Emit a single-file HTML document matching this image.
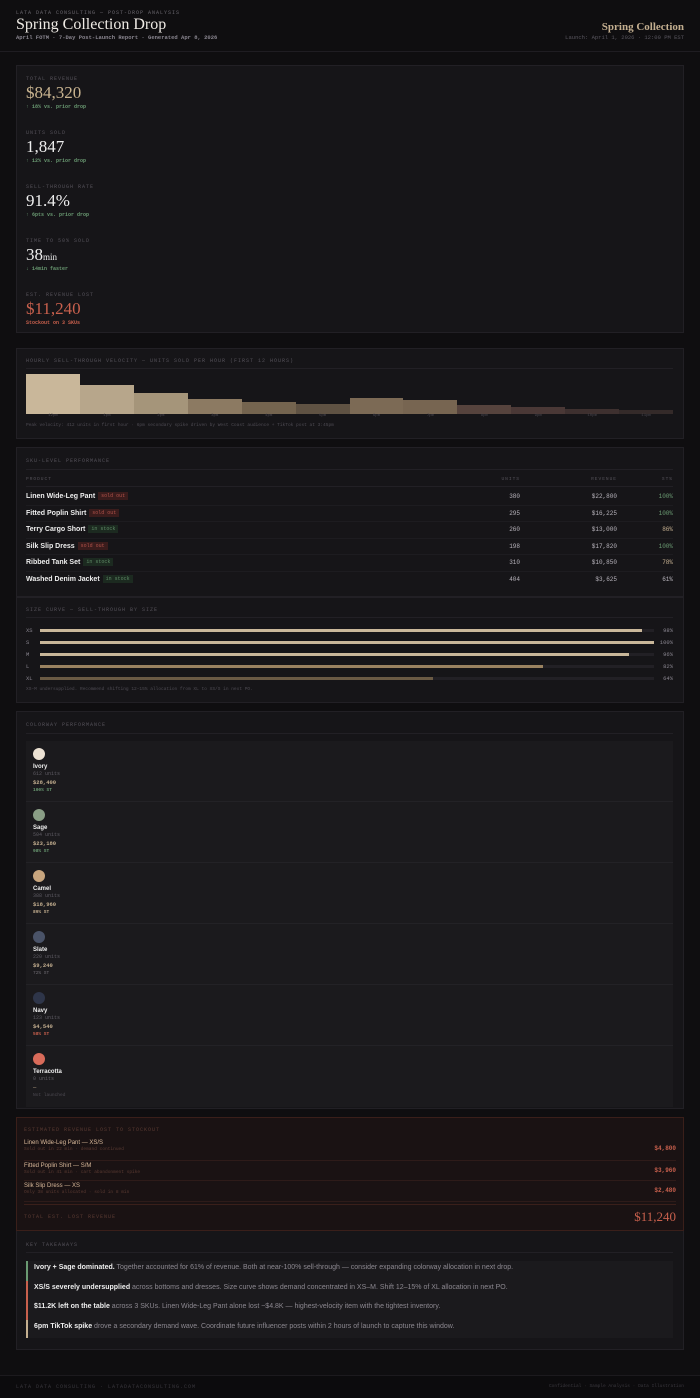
<!DOCTYPE html><html><head><meta charset="utf-8"><style>
*{margin:0;padding:0;box-sizing:border-box}
body{width:700px;height:1398px;background:#0f0e10;color:#ddd;font-family:"Liberation Mono",monospace;position:relative;overflow:hidden}
.a{position:absolute}
.serif{font-family:"Liberation Serif",serif}
.sans{font-family:"Liberation Sans",sans-serif}
.card{position:absolute;left:16px;width:668px;background:#161518;border:1px solid #222025}
.lbl{font-size:5px;letter-spacing:1px;color:#55525a;text-transform:uppercase}
.g{color:#6a9a72}.r{color:#c8604d}
.tag{font-size:5px;padding:1px 3px;margin-left:3px;vertical-align:1px;font-family:"Liberation Mono",monospace;font-weight:normal}
.so{background:#3a1c1c;color:#b0524a}.is{background:#1c2a20;color:#5e8a66}
</style></head><body>
<div class="a lbl" style="left:16px;top:10px;color:#6a676e">LATA DATA CONSULTING — POST-DROP ANALYSIS</div>
<div class="a serif" style="left:16px;top:16px;font-size:16px;color:#efebe5">Spring Collection Drop</div>
<div class="a" style="left:16px;top:34px;font-size:5.5px;color:#8a8690;font-weight:bold">April FOTM · 7-Day Post-Launch Report · Generated Apr 8, 2026</div>
<div class="a serif" style="right:16px;top:21px;font-size:11px;color:#c4af90;font-weight:bold">Spring Collection</div>
<div class="a" style="right:16px;top:34px;font-size:5.5px;color:#5a5760">Launch: April 1, 2026 · 12:00 PM EST</div>
<div class="a" style="left:0;top:51px;width:700px;height:1px;background:#1f1d22"></div>

<div class="card" style="top:65px;height:268px"></div>
<div class="a" style="left:26px;top:76px">
<div style="position:absolute;top:0"><div class="lbl">TOTAL REVENUE</div><div class="serif" style="font-size:17px;color:#c9b490;margin-top:1px">$84,320</div><div class="g" style="font-size:5px;margin-top:1px;white-space:nowrap;font-weight:bold">↑ 18% vs. prior drop</div></div>
<div style="position:absolute;top:54px"><div class="lbl">UNITS SOLD</div><div class="serif" style="font-size:17px;color:#eee;margin-top:1px">1,847</div><div class="g" style="font-size:5px;margin-top:1px;white-space:nowrap;font-weight:bold">↑ 12% vs. prior drop</div></div>
<div style="position:absolute;top:108px"><div class="lbl" style="white-space:nowrap">SELL-THROUGH RATE</div><div class="serif" style="font-size:17px;color:#eee;margin-top:1px">91.4%</div><div class="g" style="font-size:5px;margin-top:1px;white-space:nowrap;font-weight:bold">↑ 6pts vs. prior drop</div></div>
<div style="position:absolute;top:162px"><div class="lbl" style="white-space:nowrap">TIME TO 50% SOLD</div><div class="serif" style="font-size:17px;color:#eee;margin-top:1px">38<span style="font-size:9px">min</span></div><div class="g" style="font-size:5px;margin-top:1px;white-space:nowrap;font-weight:bold">↓ 14min faster</div></div>
<div style="position:absolute;top:216px"><div class="lbl" style="white-space:nowrap">EST. REVENUE LOST</div><div class="serif r" style="font-size:17px;margin-top:1px">$11,240</div><div class="r" style="font-size:5px;margin-top:1px;white-space:nowrap;font-weight:bold">Stockout on 3 SKUs</div></div>
</div>

<div class="card" style="top:348px;height:91px"></div>
<div class="a lbl" style="left:26px;top:358px;white-space:nowrap">HOURLY SELL-THROUGH VELOCITY — UNITS SOLD PER HOUR (FIRST 12 HOURS)</div>
<div class="a" style="left:26px;top:368px;width:647px;height:1px;background:#222025"></div>
<div class="a" style="left:26px;top:370px;width:647px;height:44px;display:flex;align-items:flex-end">
<div style="flex:1;height:40px;background:#c9b79a"></div><div style="flex:1;height:29px;background:#b7a68b"></div><div style="flex:1;height:21px;background:#a5957a"></div><div style="flex:1;height:15px;background:#8c7a62"></div><div style="flex:1;height:12px;background:#74644f"></div><div style="flex:1;height:10px;background:#5f5243"></div><div style="flex:1;height:16px;background:#7c6a55"></div><div style="flex:1;height:14px;background:#776551"></div><div style="flex:1;height:9px;background:#56433d"></div><div style="flex:1;height:7px;background:#4a3836"></div><div style="flex:1;height:5px;background:#3e302f"></div><div style="flex:1;height:4px;background:#342a29"></div></div>
<div class="a" style="left:26px;top:414px;width:647px;display:flex;font-size:4px;color:#4a474f;text-align:center"><span style="flex:1">12pm</span><span style="flex:1">1pm</span><span style="flex:1">2pm</span><span style="flex:1">3pm</span><span style="flex:1">4pm</span><span style="flex:1">5pm</span><span style="flex:1">6pm</span><span style="flex:1">7pm</span><span style="flex:1">8pm</span><span style="flex:1">9pm</span><span style="flex:1">10pm</span><span style="flex:1">11pm</span></div>
<div class="a" style="left:26px;top:423px;font-size:4.5px;color:#4e4b53;white-space:nowrap">Peak velocity: 412 units in first hour · 6pm secondary spike driven by West Coast audience + TikTok post at 3:45pm</div>

<div class="card" style="top:447px;height:150px"></div>
<div class="a lbl" style="left:26px;top:458px">SKU-LEVEL PERFORMANCE</div>
<div class="a" style="left:26px;top:469px;width:647px;height:1px;background:#222025"></div>
<div class="a lbl" style="left:26px;top:477px;width:647px;height:10px;border-bottom:1px solid #222025;font-size:4.5px">
<span class="a" style="left:0">PRODUCT</span><span class="a" style="right:153px">UNITS</span><span class="a" style="right:56px">REVENUE</span><span class="a" style="right:0">ST%</span></div>
<div class="a" style="left:26px;top:489px;width:647px;font-size:6px;color:#b8b4bc">
<div style="position:relative;height:16.5px;border-bottom:1px solid #1d1c20"><b class="sans" style="color:#eee;font-size:7px;line-height:14px">Linen Wide-Leg Pant<span class="tag so">sold out</span></b><span class="a" style="right:153px;top:4px">380</span><span class="a" style="right:56px;top:4px">$22,800</span><span class="a g" style="right:0;top:4px">100%</span></div>
<div style="position:relative;height:16.5px;border-bottom:1px solid #1d1c20"><b class="sans" style="color:#eee;font-size:7px;line-height:14px">Fitted Poplin Shirt<span class="tag so">sold out</span></b><span class="a" style="right:153px;top:4px">295</span><span class="a" style="right:56px;top:4px">$16,225</span><span class="a g" style="right:0;top:4px">100%</span></div>
<div style="position:relative;height:16.5px;border-bottom:1px solid #1d1c20"><b class="sans" style="color:#eee;font-size:7px;line-height:14px">Terry Cargo Short<span class="tag is">in stock</span></b><span class="a" style="right:153px;top:4px">260</span><span class="a" style="right:56px;top:4px">$13,000</span><span class="a" style="right:0;top:4px;color:#c4af90">86%</span></div>
<div style="position:relative;height:16.5px;border-bottom:1px solid #1d1c20"><b class="sans" style="color:#eee;font-size:7px;line-height:14px">Silk Slip Dress<span class="tag so">sold out</span></b><span class="a" style="right:153px;top:4px">198</span><span class="a" style="right:56px;top:4px">$17,820</span><span class="a g" style="right:0;top:4px">100%</span></div>
<div style="position:relative;height:16.5px;border-bottom:1px solid #1d1c20"><b class="sans" style="color:#eee;font-size:7px;line-height:14px">Ribbed Tank Set<span class="tag is">in stock</span></b><span class="a" style="right:153px;top:4px">310</span><span class="a" style="right:56px;top:4px">$10,850</span><span class="a" style="right:0;top:4px;color:#c4af90">78%</span></div>
<div style="position:relative;height:16.5px"><b class="sans" style="color:#eee;font-size:7px;line-height:14px">Washed Denim Jacket<span class="tag is">in stock</span></b><span class="a" style="right:153px;top:4px">404</span><span class="a" style="right:56px;top:4px">$3,625</span><span class="a" style="right:0;top:4px">61%</span></div>
</div>

<div class="card" style="top:597px;height:106px"></div>
<div class="a lbl" style="left:26px;top:607px;white-space:nowrap">SIZE CURVE — SELL-THROUGH BY SIZE</div>
<div class="a" style="left:26px;top:617px;width:647px;height:1px;background:#222025"></div>
<div class="a" style="left:26px;top:627px;width:647px;font-size:5.5px;color:#8a8690">
<div style="position:relative;height:12px"><span>XS</span><div class="a" style="left:14px;top:2px;width:614px;height:3px;background:#222025"><div style="width:98%;height:3px;background:#c9b79a"></div></div><span class="a" style="right:0">98%</span></div>
<div style="position:relative;height:12px"><span>S</span><div class="a" style="left:14px;top:2px;width:614px;height:3px;background:#222025"><div style="width:100%;height:3px;background:#c9b79a"></div></div><span class="a" style="right:0">100%</span></div>
<div style="position:relative;height:12px"><span>M</span><div class="a" style="left:14px;top:2px;width:614px;height:3px;background:#222025"><div style="width:96%;height:3px;background:#c9b79a"></div></div><span class="a" style="right:0">96%</span></div>
<div style="position:relative;height:12px"><span>L</span><div class="a" style="left:14px;top:2px;width:614px;height:3px;background:#222025"><div style="width:82%;height:3px;background:#9a8260"></div></div><span class="a" style="right:0">82%</span></div>
<div style="position:relative;height:12px"><span>XL</span><div class="a" style="left:14px;top:2px;width:614px;height:3px;background:#222025"><div style="width:64%;height:3px;background:#6a5a44"></div></div><span class="a" style="right:0">64%</span></div>
</div>
<div class="a" style="left:26px;top:687px;font-size:4.5px;color:#4e4b53;white-space:nowrap">XS–M undersupplied. Recommend shifting 12–15% allocation from XL to XS/S in next PO.</div>

<div class="card" style="top:711px;height:398px"></div>
<div class="a lbl" style="left:26px;top:722px">COLORWAY PERFORMANCE</div>
<div class="a" style="left:26px;top:733px;width:647px;height:1px;background:#222025"></div>
<div class="a" style="left:26px;top:741px;width:647px;height:366px;background:#1b1a1d">
<div style="position:relative;height:61px;border-bottom:1px solid #232226;padding:7px"><div style="width:12px;height:12px;border-radius:50%;background:#ece2d4"></div><div class="sans" style="font-weight:bold;font-size:6px;color:#eee;margin-top:4px">Ivory</div><div style="font-size:5px;color:#5e5b63;margin-top:1px">612 units</div><div style="font-size:5.5px;color:#c4af90;margin-top:2px;font-weight:bold">$28,400</div><div class="g" style="font-size:4.5px;margin-top:2px;font-weight:bold">100% ST</div></div>
<div style="position:relative;height:61px;border-bottom:1px solid #232226;padding:7px"><div style="width:12px;height:12px;border-radius:50%;background:#8a9e86"></div><div class="sans" style="font-weight:bold;font-size:6px;color:#eee;margin-top:4px">Sage</div><div style="font-size:5px;color:#5e5b63;margin-top:1px">504 units</div><div style="font-size:5.5px;color:#c4af90;margin-top:2px;font-weight:bold">$23,180</div><div class="g" style="font-size:4.5px;margin-top:2px;font-weight:bold">98% ST</div></div>
<div style="position:relative;height:61px;border-bottom:1px solid #232226;padding:7px"><div style="width:12px;height:12px;border-radius:50%;background:#c8a57e"></div><div class="sans" style="font-weight:bold;font-size:6px;color:#eee;margin-top:4px">Camel</div><div style="font-size:5px;color:#5e5b63;margin-top:1px">388 units</div><div style="font-size:5.5px;color:#c4af90;margin-top:2px;font-weight:bold">$18,960</div><div style="font-size:4.5px;margin-top:2px;color:#c4af90;font-weight:bold">89% ST</div></div>
<div style="position:relative;height:61px;border-bottom:1px solid #232226;padding:7px"><div style="width:12px;height:12px;border-radius:50%;background:#4a5368"></div><div class="sans" style="font-weight:bold;font-size:6px;color:#eee;margin-top:4px">Slate</div><div style="font-size:5px;color:#5e5b63;margin-top:1px">220 units</div><div style="font-size:5.5px;color:#c4af90;margin-top:2px;font-weight:bold">$9,240</div><div style="font-size:4.5px;margin-top:2px;color:#6e6b72">72% ST</div></div>
<div style="position:relative;height:61px;border-bottom:1px solid #232226;padding:7px"><div style="width:12px;height:12px;border-radius:50%;background:#2e3549"></div><div class="sans" style="font-weight:bold;font-size:6px;color:#eee;margin-top:4px">Navy</div><div style="font-size:5px;color:#5e5b63;margin-top:1px">123 units</div><div style="font-size:5.5px;color:#c4af90;margin-top:2px;font-weight:bold">$4,540</div><div class="r" style="font-size:4.5px;margin-top:2px;font-weight:bold">58% ST</div></div>
<div style="position:relative;height:61px;padding:7px"><div style="width:12px;height:12px;border-radius:50%;background:#d96b5a"></div><div class="sans" style="font-weight:bold;font-size:6px;color:#eee;margin-top:4px">Terracotta</div><div style="font-size:5px;color:#5e5b63;margin-top:1px">0 units</div><div style="font-size:5.5px;color:#c4af90;margin-top:2px">—</div><div style="font-size:4.5px;margin-top:2px;color:#4e4b53">Not launched</div></div>
</div>

<div class="card" style="top:1117px;height:233px"></div>
<div class="a" style="left:16px;top:1117px;width:668px;height:114px;background:#1a1213;border:1px solid #3a1f1a"></div>
<div class="a lbl" style="left:24px;top:1127px;color:#5a3a32">ESTIMATED REVENUE LOST TO STOCKOUT</div>
<div class="a" style="left:24px;top:1140px;width:652px">
<div style="position:relative;height:20.5px;border-bottom:1px solid #2e1b19"><div class="sans" style="font-size:6px;color:#d9b99a">Linen Wide-Leg Pant — XS/S</div><div style="font-size:4.5px;color:#5a3a32;margin-top:1px">Sold out in 22 min · demand continued</div><span class="a r" style="right:0;top:5px;font-size:6px;font-weight:bold">$4,800</span></div>
<div style="position:relative;height:20.5px;border-bottom:1px solid #2e1b19;padding-top:2px"><div class="sans" style="font-size:6px;color:#d9b99a">Fitted Poplin Shirt — S/M</div><div style="font-size:4.5px;color:#5a3a32;margin-top:1px">Sold out in 41 min · cart abandonment spike</div><span class="a r" style="right:0;top:6px;font-size:6px;font-weight:bold">$3,960</span></div>
<div style="position:relative;height:20.5px;border-bottom:1px solid #2e1b19;padding-top:2px"><div class="sans" style="font-size:6px;color:#d9b99a">Silk Slip Dress — XS</div><div style="font-size:4.5px;color:#5a3a32;margin-top:1px">Only 38 units allocated · sold in 8 min</div><span class="a r" style="right:0;top:6px;font-size:6px;font-weight:bold">$2,480</span></div>
</div>
<div class="a" style="left:24px;top:1204px;width:652px;height:1px;background:#3a1f1a"></div>
<div class="a lbl" style="left:24px;top:1214px;color:#5a3a32">TOTAL EST. LOST REVENUE</div>
<div class="a serif r" style="right:24px;top:1209px;font-size:13px">$11,240</div>

<div class="a lbl" style="left:26px;top:1242px">KEY TAKEAWAYS</div>
<div class="a" style="left:26px;top:1252px;width:647px;height:1px;background:#222025"></div>
<div class="a sans" style="left:26px;top:1261px;width:647px;height:77px;background:#1b1a1d;font-size:7px;color:#8c8890">
<div style="height:19.5px;border-left:2px solid #6a9a72;padding:3px 6px;white-space:nowrap"><b style="color:#eee">Ivory + Sage dominated.</b> Together accounted for 61% of revenue. Both at near-100% sell-through — consider expanding colorway allocation in next drop.</div>
<div style="height:19.5px;border-left:2px solid #c8604d;padding:3px 6px;white-space:nowrap"><b style="color:#eee">XS/S severely undersupplied</b> across bottoms and dresses. Size curve shows demand concentrated in XS–M. Shift 12–15% of XL allocation in next PO.</div>
<div style="height:19.5px;border-left:2px solid #c8604d;padding:3px 6px;white-space:nowrap"><b style="color:#eee">$11.2K left on the table</b> across 3 SKUs. Linen Wide-Leg Pant alone lost ~$4.8K — highest-velocity item with the tightest inventory.</div>
<div style="height:18.5px;border-left:2px solid #c4af90;padding:3px 6px;white-space:nowrap"><b style="color:#eee">6pm TikTok spike</b> drove a secondary demand wave. Coordinate future influencer posts within 2 hours of launch to capture this window.</div>
</div>

<div class="a" style="left:0;top:1375px;width:700px;height:23px;background:#0c0b0d;border-top:1px solid #1c1a1e"></div>
<div class="a lbl" style="left:16px;top:1384px;color:#3a383e">LATA DATA CONSULTING · LATADATACONSULTING.COM</div>
<div class="a" style="right:16px;top:1384px;font-size:4.5px;color:#3a383e">Confidential · Sample Analysis · Data Illustration</div>
</body></html>
